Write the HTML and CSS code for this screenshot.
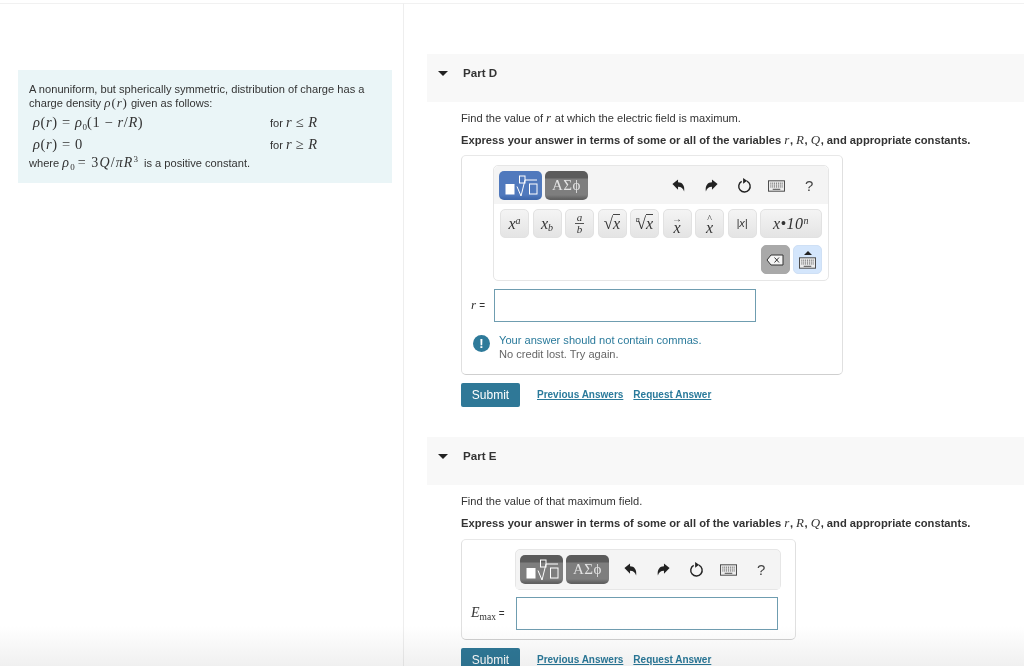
FILE: index.html
```html
<!DOCTYPE html>
<html lang="en">
<head>
<meta charset="utf-8">
<title>Part D and Part E</title>
<link rel="stylesheet" href="styles.css">
</head>
<body>
<svg class="defs" width="0" height="0" aria-hidden="true">
  <defs>
    <symbol id="undo" viewBox="0 0 16 16"><path d="M1.500 6.500 7.500 1.500v3c4.500 0 7.500 3.500 6.500 10-1-3.500-3-5.200-6.500-5.200v3.200z"/></symbol>
    <symbol id="redo" viewBox="0 0 16 16"><path d="M14.500 6.500 8.500 1.500v3c-4.500 0-7.500 3.500-6.500 10 1-3.500 3-5.200 6.500-5.200v3.200z"/></symbol>
    <symbol id="reset" viewBox="0 0 16 16"><path d="M10.500 3.300A6.100 6.100 0 1 1 5 3.500" fill="none" stroke="currentColor" stroke-width="1.500"/><path d="M6.500 0v6.200L10.800 3z"/></symbol>
    <symbol id="kbd" viewBox="0 0 18 12"><rect x=".5" y=".5" width="17" height="11" fill="#ececec" stroke="#444"/><path d="M2.500 3h13M2.500 5h13M2.500 7h13" stroke="#444" stroke-dasharray="1 1" fill="none"/><path d="M5 9.500h8" stroke="#444" fill="none"/></symbol>
    <symbol id="tpl" viewBox="0 0 43 29"><rect x="6.500" y="13" width="9" height="10.500" fill="#fff"/><rect x="20.500" y="5" width="5.500" height="7" fill="none" stroke="#fff"/><path d="M18 15.500l4 9.500 4-16h12" fill="none" stroke="#fff"/><rect x="30.500" y="13" width="7.500" height="10" fill="none" stroke="#fff"/></symbol>
  </defs>
</svg>
<div class="page">
  <aside class="left">
    <div class="intro">
      <p class="intro-line">A nonuniform, but spherically symmetric, distribution of charge has a charge density <span class="m mw">ρ</span><span class="mr mw">(</span><span class="m mw">r</span><span class="mr mw">)</span> given as follows:</p>
      <div class="eq-row eq-first"><span class="eq-l"><span class="m">ρ</span><span class="mr">(</span><span class="m">r</span><span class="mr">) = </span><span class="m">ρ</span><sub class="sb">0</sub><span class="mr">(1 − </span><span class="m">r</span><span class="mr">/</span><span class="m">R</span><span class="mr">)</span></span><span class="eq-r">for <span class="m">r</span> <span class="mr">≤</span> <span class="m">R</span></span></div>
      <div class="eq-row eq-second"><span class="eq-l"><span class="m">ρ</span><span class="mr">(</span><span class="m">r</span><span class="mr">) = 0</span></span><span class="eq-r">for <span class="m">r</span> <span class="mr">≥</span> <span class="m">R</span></span></div>
      <p class="intro-last">where <span class="m">ρ</span><sub class="sb">0</sub> <span class="mr">= 3</span><span class="m">Q</span><span class="mr">/</span><span class="m">πR</span><sup class="sb sb-end">3</sup> is a positive constant.</p>
    </div>
  </aside>
  <main class="right">
    <section class="part part-d">
      <header class="part-head"><span class="caret"></span><h2>Part D</h2></header>
      <div class="part-body">
        <p class="q">Find the value of <span class="m">r</span> at which the electric field is maximum.</p>
        <p class="q-b">Express your answer in terms of some or all of the variables <span class="m">r</span>, <span class="m">R</span>, <span class="m">Q</span>, and appropriate constants.</p>
        <div class="answer answer-d">
          <div class="editor">
            <div class="bar">
              <span class="mode mode-on"><svg class="tpl-ic"><use href="#tpl"/></svg></span>
              <span class="mode mode-off">ΑΣϕ</span>
              <span class="tools tools-d">
                <svg class="ic"><use href="#undo"/></svg>
                <svg class="ic"><use href="#redo"/></svg>
                <svg class="ic ic-last"><use href="#reset"/></svg>
                <svg class="ic-k"><use href="#kbd"/></svg>
                <span class="help">?</span>
              </span>
            </div>
            <div class="keys">
              <span class="key"><span class="kv">x<sup>a</sup></span></span>
              <span class="key"><span class="kv">x<sub>b</sub></span></span>
              <span class="key"><span class="frac"><span>a</span><span class="frac-b">b</span></span></span>
              <span class="key"><span class="kv rad">√<span class="over">x</span></span></span>
              <span class="key"><span class="kv rad"><sup class="idx">n</sup>√<span class="over">x</span></span></span>
              <span class="key"><span class="kv acc"><span class="a-top">→</span>x</span></span>
              <span class="key"><span class="kv acc"><span class="a-top">^</span>x</span></span>
              <span class="key"><span class="kv abs">|x|</span></span>
              <span class="key key-wide"><span class="kv">x•10<sup>n</sup></span></span>
            </div>
            <div class="keys keys-end">
              <span class="key key-del"><svg width="18" height="12" viewBox="0 0 18 12"><path d="M5 1h12v10H5L1 6z" fill="#f4f4f4" stroke="#333"/><path d="M8.500 3.500l4.500 5M13 3.500l-4.500 5" stroke="#333" fill="none"/></svg></span>
              <span class="key key-kb"><span class="up"></span><svg class="ic-k"><use href="#kbd"/></svg></span>
            </div>
          </div>
          <div class="field-row field-d"><span class="label"><span class="m">r</span> =</span><span class="field"></span></div>
          <div class="msg">
            <span class="bang">!</span>
            <div><div class="msg-a">Your answer should not contain commas.</div><div class="msg-b">No credit lost. Try again.</div></div>
          </div>
        </div>
        <div class="actions"><span class="submit">Submit</span><a class="link link-prev">Previous Answers</a><a class="link">Request Answer</a></div>
      </div>
    </section>
    <section class="part part-e">
      <header class="part-head"><span class="caret"></span><h2>Part E</h2></header>
      <div class="part-body">
        <p class="q">Find the value of that maximum field.</p>
        <p class="q-b">Express your answer in terms of some or all of the variables <span class="m">r</span>, <span class="m">R</span>, <span class="m">Q</span>, and appropriate constants.</p>
        <div class="answer answer-e">
          <div class="editor editor-e">
            <div class="bar bar-e">
              <span class="mode mode-off"><svg class="tpl-ic"><use href="#tpl"/></svg></span>
              <span class="mode mode-off">ΑΣϕ</span>
              <span class="tools tools-e">
                <svg class="ic"><use href="#undo"/></svg>
                <svg class="ic"><use href="#redo"/></svg>
                <svg class="ic ic-last"><use href="#reset"/></svg>
                <svg class="ic-k"><use href="#kbd"/></svg>
                <span class="help">?</span>
              </span>
            </div>
          </div>
          <div class="field-row field-e"><span class="label label-e"><span class="m m-e">E</span><sub class="sb-max">max</sub> =</span><span class="field"></span></div>
        </div>
        <div class="actions actions-e"><span class="submit">Submit</span><a class="link link-prev">Previous Answers</a><a class="link">Request Answer</a></div>
      </div>
    </section>
  </main>
</div>
<div class="fade"></div>
</body>
</html>
```
FILE: styles.css
```css
* { box-sizing: border-box; }
html, body { margin: 0; height: 100%; overflow: hidden; background: #fff; }
body { font: 11.100px/14px "Liberation Sans", Arial, sans-serif; color: #333; position: relative; }
.defs { position: absolute; }
p, h2 { margin: 0; }
.m { font-family: "Liberation Serif", serif; font-style: italic; font-weight: normal; font-size: 13px; letter-spacing: .5px; }
.mr { font-family: "Liberation Serif", serif; font-weight: normal; font-size: 13px; letter-spacing: .5px; }
.mw { letter-spacing: .9px; }
sub, sup { line-height: 0; }
.sb { font: 9px/0 "Liberation Serif", serif; }
.sb-end { margin-right: 3px; }
.page { display: flex; height: 666px; padding-top: 3px; }
.left { width: 404px; flex: none; border-right: 1px solid #eeeeee; border-top: 1px solid #f1f1f1; padding: 66px 11px 0 18px; }
.right { flex: 1; border-top: 1px solid #f1f1f1; padding: 50px 0 0 23px; min-width: 0; }
.intro { background: #eaf5f7; height: 113px; padding: 12px 11px 0; }
.intro-line { width: 345px; }
.eq-row { display: flex; padding-left: 4px; height: 22px; align-items: center; }
.eq-first { margin-top: 1px; }
.eq-l { width: 237px; flex: none; }
.eq-l .m, .eq-l .mr { font-size: 14.500px; letter-spacing: .6px; }
.eq-r .m, .eq-r .mr { font-size: 14.500px; letter-spacing: 1.200px; }
.intro-last { margin-top: 1px; }
.intro-last .m, .intro-last .mr { font-size: 14px; letter-spacing: 1.100px; }
.part-head { background: #f8f8f8; height: 48px; display: flex; padding: 12px 0 0 11px; }
.caret { width: 0; height: 0; margin-top: 5px; border: 5px solid transparent; border-top-color: #222; border-bottom: 0; }
h2 { font-size: 11.600px; font-weight: bold; margin-left: 15px; line-height: 14px; color: #333; }
.part-body { padding: 9px 0 0 34px; }
.q { height: 14px; }
.q-b { font-weight: bold; margin-top: 8px; height: 14px; white-space: nowrap; font-size: 11.200px; }
.answer { position: relative; border: 1px solid #e0e0e0; border-top-color: #e8e8e8; border-bottom-color: #cfcfcf; border-radius: 5px; background: #fff; }
.answer-d { width: 382px; height: 220px; margin-top: 8px; padding: 9px 13px 0 31px; }
.answer-e { width: 335px; height: 101px; margin-top: 9px; padding: 9px 0 0 53px; }
.editor { width: 336px; height: 116px; border: 1px solid #e6e6e6; border-radius: 5px; }
.editor-e { width: 266px; height: 41px; background: #f4f4f4; }
.bar { height: 38px; background: #f4f4f4; border-radius: 5px 5px 0 0; display: flex; align-items: flex-start; padding: 5px 0 0 5px; gap: 3px; }
.bar-e { padding-left: 4px; height: 39px; }
.mode { width: 43px; height: 29px; border-radius: 5px; display: flex; align-items: center; justify-content: center; color: #e4e4e4; font: 15px/1 "Liberation Serif", serif; letter-spacing: .5px; }
.mode-on { background: linear-gradient(#5079bd 0 24px, #3f68ac 28px); }
.mode-off { background: linear-gradient(#5c5c5c 0 7px, #7e7e7e 8px 24px, #606060 28px); }
.tpl-ic { width: 43px; height: 29px; }
.tools { display: flex; align-items: center; height: 29px; color: #222; fill: #222; }
.tools-d { margin-left: 80px; }
.tools-e { margin-left: 11px; }
.ic { width: 15px; height: 15px; margin-right: 18px; fill: #222; color: #222; }
.ic-last { margin-right: 16px; }
.ic-k { width: 17px; height: 12px; }
.help { font-size: 15px; margin-left: 20px; color: #444; }
.keys { display: flex; gap: 3.500px; padding: 5px 0 0 6px; }
.keys-end { justify-content: flex-end; padding: 0 6px 0 0; margin-top: 7px; }
.key { width: 29px; height: 29px; border-radius: 5px; background: linear-gradient(#f4f4f4, #e4e4e4); border: 1px solid #e2e2e2; display: flex; align-items: center; justify-content: center; font: italic 16px/1 "Liberation Serif", serif; color: #333; position: relative; }
.key-wide { width: 62px; font-size: 16px; letter-spacing: .5px; }
.key-del { background: #a9a9a9; border-color: #a9a9a9; }
.key-kb { background: #d4e6fc; border-color: #cfe0f5; flex-direction: column; gap: 2px; }
.up { width: 0; height: 0; border: 4px solid transparent; border-bottom-color: #222; border-top: 0; }
.frac { display: flex; flex-direction: column; align-items: center; font-size: 11px; line-height: 11px; }
.frac-b { border-top: 1px solid #555; padding: 0 2px; }
.kv sup { font-size: 10px; vertical-align: 5px; }
.kv sub { font-size: 10px; vertical-align: -2px; }
.rad { font-style: normal; font-size: 17px; white-space: nowrap; }
.over { font-style: italic; font-size: 16px; border-top: 1px solid #444; }
.rad .idx { font-style: italic; font-size: 8px; vertical-align: 7px; margin-right: -3px; }
.acc { display: flex; flex-direction: column; align-items: center; line-height: 11px; }
.a-top { font-size: 10px; font-style: normal; line-height: 7px; }
.abs { font: italic 11px/1 "Liberation Sans", sans-serif; }
.field-row { display: flex; align-items: center; }
.field-d { margin: 8px 0 0 -22px; gap: 8px; }
.field-e { margin: 7px 0 0 -44px; gap: 5px; }
.label { width: 15px; font-size: 10px; white-space: nowrap; }
.label-e { width: 40px; }
.m-e { font-size: 14px; letter-spacing: 0; }
.sb-max { font: 9.500px/0 "Liberation Serif", serif; }
.field { width: 262px; height: 33px; border: 1px solid #6f9db0; background: #fff; display: block; }
.msg { display: flex; gap: 9px; margin: 11px 0 0 -20px; }
.bang { width: 17px; height: 17px; margin-top: 2px; border-radius: 50%; background: #2e7a9a; color: #fff; font: bold 13px/17px "Liberation Sans", sans-serif; text-align: center; flex: none; }
.msg-a { color: #2a7a9b; }
.msg-b { color: #666; }
.actions { display: flex; align-items: center; margin-top: 8px; }
.submit { width: 59px; height: 24px; background: #2f7897; color: #fff; border-radius: 2px; font-size: 12px; line-height: 24px; text-align: center; }
.link { color: #2a7a9b; font-weight: bold; font-size: 10px; text-decoration: underline; margin-left: 10px; }
.link-prev { margin-left: 17px; }
.part-e { margin-top: 30px; }
.actions-e { margin-top: 8px; }
.fade { position: absolute; left: 0; right: 0; bottom: 0; height: 40px; background: linear-gradient(#fff, #f0f0f0); mix-blend-mode: multiply; pointer-events: none; }
```
